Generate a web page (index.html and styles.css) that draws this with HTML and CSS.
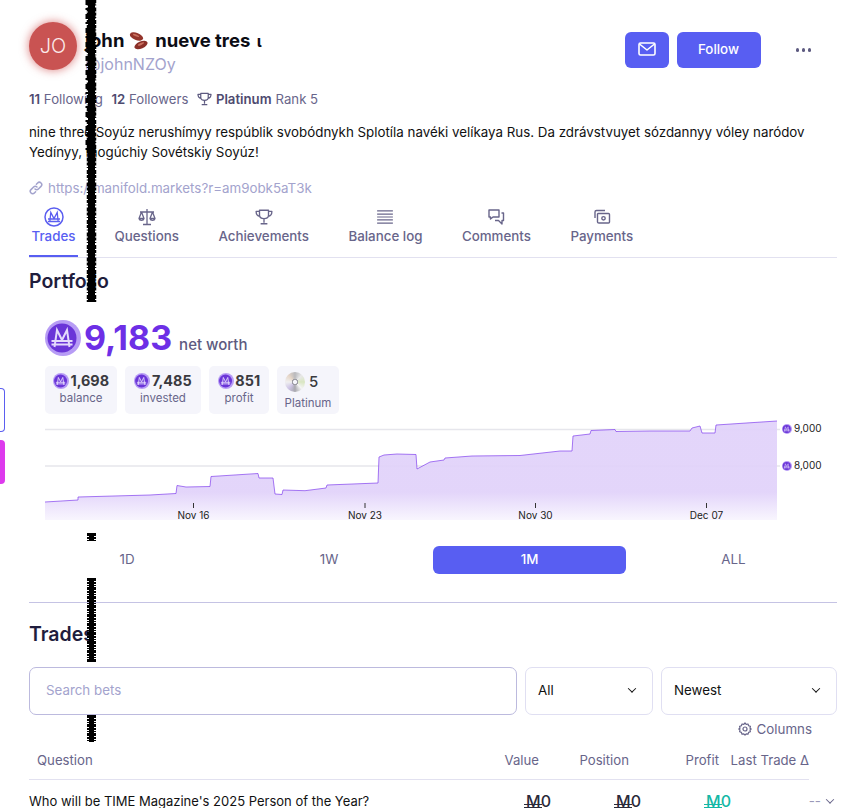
FILE: index.html
```html
<!DOCTYPE html>
<html lang="en">
<head>
  <meta charset="utf-8">
  <meta name="viewport" content="width=device-width, initial-scale=1">
  <title>john nueve tres | Manifold</title>
  <link rel="stylesheet" href="styles.css">
</head>
<body>
  <svg class="defs" width="0" height="0" aria-hidden="true">
    <defs>
      <symbol id="coin" viewBox="0 0 36 36">
        <circle cx="18" cy="18" r="18" fill="#b79cf5"/>
        <circle cx="17" cy="18" r="14.5" fill="#6a35d8"/>
        <path d="M9.5 27 L12 10 L17 20 L22 10 L24.5 27 M6.5 21 H27.5 M6.5 24.5 H27.5" fill="none" stroke="#e3d9fc" stroke-width="2"/>
      </symbol>
    </defs>
  </svg>

  <div class="side-tabs">
    <div class="side-outline"></div>
    <div class="side-pink"></div>
  </div>

  <main class="page">
    <header class="profile-head">
      <div class="avatar">JO</div>
      <div class="names">
        <div class="name">john
          <svg class="beans" viewBox="0 0 20 20" aria-hidden="true">
            <ellipse cx="7.5" cy="5.5" rx="7" ry="3.6" transform="rotate(22 7.5 5.5)" fill="#94352c"/>
            <ellipse cx="12" cy="14" rx="7" ry="3.6" transform="rotate(-24 12 14)" fill="#8a2f28"/>
            <ellipse cx="7" cy="4.4" rx="3.4" ry="1" transform="rotate(22 7 4.4)" fill="#c9705f"/>
            <ellipse cx="12" cy="13" rx="3.4" ry="1" transform="rotate(-24 12 13)" fill="#c9705f"/>
          </svg>
          nueve tres <span class="name-end">ι</span></div>
        <div class="handle">@johnNZOy</div>
      </div>
      <div class="head-actions">
        <button class="btn btn-icon" aria-label="Message">
          <svg width="18" height="14" viewBox="0 0 18 14" fill="none" stroke="#fff" stroke-width="1.6" stroke-linejoin="round"><rect x="1" y="1" width="16" height="12" rx="1.5"/><path d="M1.5 2 L9 8 L16.5 2"/></svg>
        </button>
        <button class="btn btn-follow">Follow</button>
        <div class="more"><i></i><i></i><i></i></div>
      </div>
    </header>

    <div class="stats-line">
      <span><b>11</b> Following</span>
      <span><b>12</b> Followers</span>
      <span class="rank">
        <svg width="15" height="14" viewBox="0 0 16 15" fill="none" stroke="#5d5a80" stroke-width="1.3" stroke-linejoin="round"><path d="M4 1.5 H12 V6 C12 8 10 9 8 9 C6 9 4 8 4 6 Z M4 2.5 H1 C1 5 2 6.5 4.3 6.8 M12 2.5 H15 C15 5 14 6.5 11.7 6.8 M8 9 V12.5 M5 13.5 H11"/></svg>
        <b>Platinum</b> Rank 5
      </span>
    </div>

    <p class="bio">nine three Soyúz nerushímyy respúblik svobódnykh Splotíla navéki velíkaya Rus. Da zdrávstvuyet sózdannyy vóley naródov Yedínyy, mogúchiy Sovétskiy Soyúz!</p>

    <a class="site-link" href="#">
      <svg width="14" height="14" viewBox="0 0 14 14" fill="none" stroke="#a3a3cd" stroke-width="1.5" stroke-linecap="round"><path d="M6 8 A2.4 2.4 0 0 0 9.4 8 L12 5.4 A2.4 2.4 0 0 0 8.6 2 L7.4 3.2 M8 6 A2.4 2.4 0 0 0 4.6 6 L2 8.6 A2.4 2.4 0 0 0 5.4 12 L6.6 10.8"/></svg>
      https://manifold.markets?r=am9obk5aT3k
    </a>

    <nav class="tabs">
      <a class="tab active">
        <span class="tab-icon"><svg width="20" height="20" viewBox="0 0 20 20" fill="none" stroke="#5b5ef0" stroke-width="1.5"><circle cx="10" cy="10" r="9"/><path d="M5.8 15 L6.8 5.5 L10 11.5 L13.2 5.5 L14.2 15 M4 12 H16 M4 14.5 H16" stroke-width="1.3"/></svg></span>
        Trades
      </a>
      <a class="tab">
        <span class="tab-icon"><svg width="20" height="18" viewBox="0 0 20 18" fill="none" stroke="#68658a" stroke-width="1.3" stroke-linejoin="round"><path d="M10 1 V16 M6 16.5 H14 M3 4 H17 M4.5 4 L2 10.5 H7 Z M15.5 4 L13 10.5 H18 Z M2 10.5 C2.5 13 6.5 13 7 10.5 M13 10.5 C13.5 13 17.5 13 18 10.5"/></svg></span>
        Questions
      </a>
      <a class="tab">
        <span class="tab-icon"><svg width="18" height="18" viewBox="0 0 16 15" fill="none" stroke="#68658a" stroke-width="1.2" stroke-linejoin="round"><path d="M4 1.5 H12 V6 C12 8 10 9 8 9 C6 9 4 8 4 6 Z M4 2.5 H1 C1 5 2 6.5 4.3 6.8 M12 2.5 H15 C15 5 14 6.5 11.7 6.8 M8 9 V12.5 M5 13.5 H11"/></svg></span>
        Achievements
      </a>
      <a class="tab">
        <span class="tab-icon"><svg width="18" height="18" viewBox="0 0 16 16" fill="none" stroke="#68658a" stroke-width="1.1"><path d="M1 2.5 H15 M1 5.5 H15 M1 8 H15 M1 10.5 H15 M1 13.5 H15"/></svg></span>
        Balance log
      </a>
      <a class="tab">
        <span class="tab-icon"><svg width="18" height="18" viewBox="0 0 18 18" fill="none" stroke="#68658a" stroke-width="1.4" stroke-linejoin="round"><path d="M2 2 H12 V9 H6 L3.5 11 V9 H2 Z M14.5 5 H16.5 V12.5 H15 V16 L11.5 12.5 H8"/></svg></span>
        Comments
      </a>
      <a class="tab">
        <span class="tab-icon"><svg width="18" height="18" viewBox="0 0 18 18" fill="none" stroke="#68658a" stroke-width="1.4" stroke-linejoin="round"><path d="M2 10 V4 C2 3 2.5 2.5 3.5 2.5 H12 M5 5.5 H15.5 C16 5.5 16.5 6 16.5 6.5 V14 C16.5 14.8 16 15 15.5 15 H6 C5 15 4.5 14.5 4.5 14 V6 Z"/><circle cx="10.5" cy="10.3" r="1.7"/></svg></span>
        Payments
      </a>
    </nav>

    <h2 class="section-title portfolio-title">Portfolio</h2>

    <section class="portfolio">
      <div class="net-worth">
        <svg class="coin-lg"><use href="#coin"/></svg>
        <span class="net-value">9,183</span>
        <span class="net-label">net worth</span>
      </div>

      <div class="stat-cards">
        <div class="stat-card">
          <div class="stat-top"><svg class="coin-sm"><use href="#coin"/></svg>1,698</div>
          <div class="stat-label">balance</div>
        </div>
        <div class="stat-card">
          <div class="stat-top"><svg class="coin-sm"><use href="#coin"/></svg>7,485</div>
          <div class="stat-label">invested</div>
        </div>
        <div class="stat-card">
          <div class="stat-top"><svg class="coin-sm"><use href="#coin"/></svg>851</div>
          <div class="stat-label">profit</div>
        </div>
        <div class="stat-card">
          <div class="stat-top stat-rank">
            <span class="disc"></span>
            5
          </div>
          <div class="stat-label">Platinum</div>
        </div>
      </div>

      <svg class="chart" width="792" height="112" viewBox="45 418 792 112">
        <defs>
          <linearGradient id="areaFill" x1="0" y1="421" x2="0" y2="520" gradientUnits="userSpaceOnUse">
            <stop offset="0" stop-color="#e1d2fa"/>
            <stop offset="0.72" stop-color="#e1d2fa"/>
            <stop offset="1" stop-color="#f8f5fe"/>
          </linearGradient>
        </defs>
        <path d="M45 429.5 H780 M45 466 H780" stroke="#e6e6ec" stroke-width="1.4"/>
        <path fill="url(#areaFill)" fill-opacity="0.93" d="M45 502 L78 500 V497 L150 495 L176 493.5 L177 485.5 L186 487 L210 486.5 L211 476.5 L258 473.5 L259 478 L273 478 L275 494 L282 494.5 L283 490 L305 490.7 L326 488 L327 485 L378 483 L379 457 L384 455 L397 454 L416 454.5 L417 469 L430 462 L444 460 L445 458 L472 456 L520 455.5 L560 451 L572 451 L573 436 L590 434 L591 430.5 L615 429.5 L616 431.5 L650 431 L690 431 L692 428 L700 426 L702 433 L715 433 L716 425 L777 421 V520 H45 Z"/>
        <path fill="none" stroke="#7c3aed" stroke-width="0.8" stroke-opacity="0.85" d="M45 502 L78 500 V497 L150 495 L176 493.5 L177 485.5 L186 487 L210 486.5 L211 476.5 L258 473.5 L259 478 L273 478 L275 494 L282 494.5 L283 490 L305 490.7 L326 488 L327 485 L378 483 L379 457 L384 455 L397 454 L416 454.5 L417 469 L430 462 L444 460 L445 458 L472 456 L520 455.5 L560 451 L572 451 L573 436 L590 434 L591 430.5 L615 429.5 L616 431.5 L650 431 L690 431 L692 428 L700 426 L702 433 L715 433 L716 425 L777 421"/>
        <path d="M193.5 503 V508 M365 503 V508 M535.5 503 V508 M706.5 503 V508" stroke="#333" stroke-width="1"/>
        <g class="tick-label" text-anchor="middle">
          <text x="193.5" y="519">Nov 16</text>
          <text x="365" y="519">Nov 23</text>
          <text x="535.5" y="519">Nov 30</text>
          <text x="706.5" y="519">Dec 07</text>
        </g>
        <use href="#coin" x="782" y="424" width="10" height="10"/>
        <use href="#coin" x="782" y="461" width="10" height="10"/>
        <g class="tick-label">
          <text x="794" y="432">9,000</text>
          <text x="794" y="469">8,000</text>
        </g>
      </svg>
    </section>

    <div class="time-range">
      <button class="range">1D</button>
      <button class="range">1W</button>
      <button class="range active">1M</button>
      <button class="range">ALL</button>
    </div>

    <hr class="divider">

    <h2 class="section-title trades-title">Trades</h2>

    <div class="filters">
      <input class="search" placeholder="Search bets">
      <div class="select select-all">All <span class="chev"></span></div>
      <div class="select select-sort">Newest <span class="chev"></span></div>
    </div>

    <div class="columns-row">
      <svg width="14" height="14" viewBox="0 0 14 14" fill="none" stroke="#68658a" stroke-width="1.2"><path d="M7 1 L8.2 2.4 L10 2 L10.6 3.8 L12.4 4.4 L12 6.2 L13.2 7 L12 8 L12.4 9.8 L10.6 10.4 L10 12.2 L8.2 11.8 L7 13 L5.8 11.8 L4 12.2 L3.4 10.4 L1.6 9.8 L2 8 L0.8 7 L2 6.2 L1.6 4.4 L3.4 3.8 L4 2 L5.8 2.4 Z" stroke-linejoin="round"/><circle cx="7" cy="7" r="2"/></svg>
      Columns
    </div>

    <div class="trades-table">
      <div class="t-head">
        <span class="c-question">Question</span>
        <span class="c-value">Value</span>
        <span class="c-position">Position</span>
        <span class="c-profit">Profit</span>
        <span class="c-last">Last Trade Δ</span>
      </div>
      <div class="t-row">
        <span class="c-question q-text">Who will be TIME Magazine's 2025 Person of the Year?</span>
        <span class="c-value amount"><span class="m">M</span>0</span>
        <span class="c-position amount"><span class="m">M</span>0</span>
        <span class="c-profit amount gain"><span class="m">M</span>0</span>
        <span class="c-last dash">--</span>
        <span class="row-chev"></span>
      </div>
    </div>
  </main>

  <svg class="scratch" width="14" height="808" viewBox="0 0 14 808" aria-hidden="true">
    <path class="core" d="M6.5 0 V302"/>
    <path class="edge" d="M6.5 0 V302"/>
    <path class="edge-top" d="M5.5 0 V150"/>
    <path class="dots-core" d="M6.5 533 V541 M6.5 578 V662 M6.5 715 V742"/>
    <path class="dots" d="M6.5 533 V541 M6.5 578 V662 M6.5 715 V742"/>
  </svg>
</body>
</html>
```

FILE: styles.css
```css
:root {
  --indigo: #585ef2;
  --violet: #6d2fe6;
  --ink: #1f1d3d;
  --muted: #68658a;
  --soft: #a3a3cd;
  --line: #e2e1f0;
  --card: #f5f5fb;
}
*, *::before, *::after {
  box-sizing: border-box;
}
html, body {
  margin: 0;
  padding: 0;
  height: 808px;
  overflow: hidden;
  background: #fff;
}
body {
  position: relative;
  font-family: Inter, "Noto Sans", "Liberation Sans", sans-serif;
  font-size: 13.33px;
  color: #111;
}
.defs {
  position: absolute;
}

/* bits of the sidebar peeking in */
.side-tabs {
  position: absolute;
  left: 0;
  top: 388px;
  display: flex;
  flex-direction: column;
  gap: 8px;
}
.side-outline, .side-pink {
  width: 5px;
  height: 44px;
  border-radius: 0 4px 4px 0;
}
.side-outline {
  border: 1px solid #5b5ef0;
  border-left: 0;
}
.side-pink {
  background: #dd3aed;
}

.page {
  width: 808px;
  margin-left: 29px;
}

/* header */
.profile-head {
  display: flex;
  align-items: flex-start;
  height: 48px;
  margin-top: 22px;
}
.avatar {
  width: 48px;
  height: 48px;
  flex: none;
  border-radius: 50%;
  background: #c95352;
  box-shadow: 0 0 8px 1px rgba(200, 60, 60, 0.55);
  color: #fbeaea;
  font-size: 20px;
  font-weight: 300;
  display: flex;
  align-items: center;
  justify-content: center;
}
.names {
  margin: 7px 0 0 8px;
  display: flex;
  flex-direction: column;
  gap: 3px;
}
.name {
  font-size: 18.5px;
  line-height: 22px;
  font-weight: 700;
  color: #0c0c14;
  white-space: nowrap;
}
.name-end {
  font-size: 16px;
  margin-left: 2px;
}
.beans {
  width: 20px;
  height: 20px;
  margin-right: 2px;
  vertical-align: -4px;
}
.handle {
  font-size: 16px;
  line-height: 18px;
  color: var(--soft);
}
.head-actions {
  margin-left: auto;
  display: flex;
  align-items: center;
  gap: 8px;
  margin-top: 10px;
}
.btn {
  height: 36px;
  padding: 0 0 2px;
  border: 0;
  border-radius: 6px;
  background: var(--indigo);
  color: #fff;
  font: 500 13.33px Inter, "Noto Sans", sans-serif;
  display: flex;
  align-items: center;
  justify-content: center;
}
.btn-icon {
  width: 44px;
}
.btn-follow {
  width: 84px;
}
.more {
  display: flex;
  gap: 2.5px;
  margin: 0 26px 0 27px;
}
.more i {
  width: 3.5px;
  height: 3.5px;
  border-radius: 50%;
  background: #5d5a80;
}

.stats-line {
  display: flex;
  align-items: center;
  gap: 8.5px;
  margin-top: 20px;
  font-size: 13.2px;
  line-height: 18px;
  color: var(--muted);
}
.stats-line b {
  font-weight: 600;
  color: #4e4b70;
}
.rank {
  display: flex;
  align-items: center;
  gap: 4px;
}

.bio {
  margin: 14px 0 0;
  line-height: 20px;
  color: #111;
}
.site-link {
  display: flex;
  align-items: center;
  gap: 5px;
  margin-top: 17px;
  line-height: 18px;
  color: var(--soft);
  text-decoration: none;
}

/* tabs */
.tabs {
  display: flex;
  gap: 33.5px;
  height: 51px;
  margin-top: 10px;
  border-bottom: 1px solid var(--line);
}
.tab {
  display: flex;
  flex-direction: column;
  align-items: center;
  height: 50px;
  padding: 0 3px;
  color: var(--muted);
  font-weight: 500;
  line-height: 18px;
}
.tab-icon {
  display: flex;
  align-items: center;
  justify-content: center;
  height: 20px;
}
.tab.active {
  width: 49px;
  padding: 0;
  color: var(--indigo);
  border-bottom: 2px solid var(--indigo);
}

.section-title {
  margin: 0;
  font-size: 19.5px;
  line-height: 28px;
  font-weight: 600;
  color: var(--ink);
}
.portfolio-title {
  margin-top: 9px;
}

/* portfolio */
.portfolio {
  padding-left: 16px;
  margin-top: 25px;
}
.net-worth {
  display: flex;
  align-items: baseline;
  height: 36px;
}
.coin-lg {
  width: 36px;
  height: 36px;
  align-self: center;
  margin-right: 3px;
}
.net-value {
  font-size: 34px;
  line-height: 36px;
  font-weight: 700;
  color: var(--violet);
}
.net-label {
  margin-left: 7px;
  font-size: 15px;
  font-weight: 500;
  color: #5d5a80;
}
.stat-cards {
  display: grid;
  grid-template-columns: 72px 76px 60px 62px;
  gap: 8px;
  margin-top: 10px;
}
.stat-card {
  height: 48px;
  padding: 6px 0 0;
  border-radius: 5px;
  background: var(--card);
  text-align: center;
}
.stat-top {
  display: flex;
  align-items: center;
  justify-content: center;
  gap: 1.5px;
  font-size: 14.4px;
  line-height: 18px;
  font-weight: 700;
  color: #3a3a3f;
}
.coin-sm {
  width: 16px;
  height: 16px;
}
.stat-rank {
  justify-content: flex-start;
  padding-left: 8px;
  font-weight: 500;
  font-size: 15px;
  gap: 4px;
}
.disc {
  width: 20px;
  height: 20px;
  border-radius: 50%;
  background:
    radial-gradient(circle, #f5f5fb 0 2px, #9c9ca4 2.2px 3px, transparent 3.4px),
    conic-gradient(#b9b9bd, #e8e8e8, #d9e6c2, #f4f4f4, #a8a8ae, #cfc6e6, #f0f0f0, #e6d6c8, #b9b9bd);
}
.stat-label {
  margin-top: 1px;
  font-size: 11.5px;
  line-height: 15px;
  color: var(--muted);
}
.stat-rank + .stat-label {
  margin-top: 4px;
}
.chart {
  display: block;
  margin-top: 4px;
}
.tick-label {
  font-size: 10px;
  fill: #222;
}

/* range picker */
.time-range {
  display: grid;
  grid-template-columns: 196px 192px 193px 199px;
  gap: 8px;
  margin-top: 16px;
}
.range {
  height: 28px;
  padding: 0 0 2px;
  border: 0;
  border-radius: 6px;
  background: transparent;
  color: var(--muted);
  font: 400 13.33px Inter, "Noto Sans", sans-serif;
}
.range.active {
  background: var(--indigo);
  color: #fff;
  font-weight: 500;
}
.divider {
  margin: 28px 0 0;
  border: 0;
  border-top: 1px solid #c5c3e4;
}
.trades-title {
  margin-top: 17px;
}

/* filters */
.filters {
  display: flex;
  gap: 8px;
  margin-top: 19px;
}
.search, .select {
  height: 48px;
  border-radius: 7px;
  background: #fff;
  font: 400 13.33px Inter, "Noto Sans", sans-serif;
}
.search {
  width: 488px;
  padding: 0 16px 2px;
  border: 1px solid #bcbade;
  outline: 0;
}
.search::placeholder {
  color: var(--soft);
}
.select {
  display: flex;
  align-items: center;
  justify-content: space-between;
  padding: 0 17px 2px 12px;
  border: 1px solid #e0dff2;
  color: #111;
}
.select-all {
  width: 128px;
}
.select-sort {
  width: 176px;
}
.chev, .row-chev {
  width: 6px;
  height: 6px;
  border-right: 1.8px solid #111;
  border-bottom: 1.8px solid #111;
  transform: rotate(45deg) translate(-1px, -1px);
}
.columns-row {
  display: flex;
  justify-content: flex-end;
  align-items: center;
  gap: 5px;
  margin-top: 5px;
  padding-right: 25px;
  height: 18px;
  color: var(--muted);
}

/* table */
.trades-table {
  width: 780px;
  margin-top: 12px;
}
.t-head, .t-row {
  display: flex;
  align-items: center;
}
.t-head {
  height: 30px;
  padding: 0 0 10px;
  border-bottom: 1px solid var(--line);
  font-size: 13.2px;
  color: var(--muted);
}
.t-row {
  height: 44px;
  padding-bottom: 2px;
  position: relative;
  white-space: nowrap;
}
.t-row > span {
  flex: none;
}
.c-question {
  width: 460px;
}
.t-head .c-question {
  padding-left: 8px;
}
.q-text {
  font-size: 13px;
}
.c-value {
  width: 50px;
  text-align: right;
}
.c-position {
  width: 90px;
  text-align: right;
}
.c-profit {
  width: 90px;
  text-align: right;
}
.c-last {
  width: 90px;
  text-align: right;
}
.t-row .c-value {
  width: 62px;
}
.amount {
  font-size: 16px;
  font-weight: 500;
  color: #2a2a3a;
}
.gain {
  color: #14b8a6;
}
.m {
  position: relative;
}
.m::after {
  content: "";
  position: absolute;
  left: -2px;
  right: -1px;
  bottom: 3px;
  height: 4px;
  border-top: 1px solid currentColor;
  border-bottom: 1px solid currentColor;
}
.dash {
  color: #9a98b8;
}
.t-row .row-chev {
  position: absolute;
  right: -24px;
  top: 18px;
  border-color: #68658a;
}

/* the black scribble running down the capture */
.scratch {
  position: absolute;
  left: 85px;
  top: 0;
}
.scratch path {
  fill: none;
  stroke: #000;
}
.scratch .core {
  stroke-width: 7px;
}
.scratch .edge {
  stroke-width: 9.5px;
  stroke-dasharray: 3 1.5 1 2 4 1;
}
.scratch .edge-top {
  stroke-width: 10px;
  stroke-dasharray: 5 3 2 4;
}
.scratch .dots-core {
  stroke-width: 5px;
}
.scratch .dots {
  stroke-width: 9px;
  stroke-dasharray: 3 1 2 1 1 1;
}
```
